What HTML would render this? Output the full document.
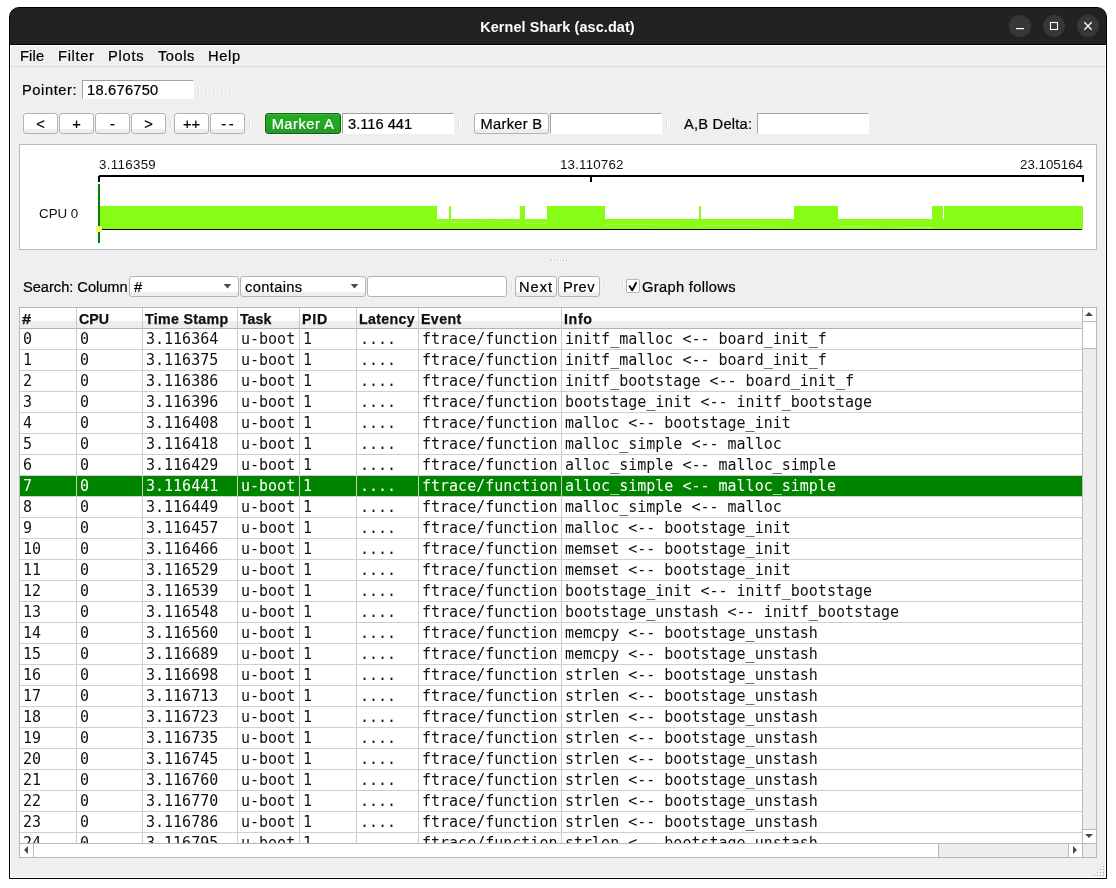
<!DOCTYPE html>
<html lang="en">
<head>
<meta charset="utf-8">
<title>Kernel Shark (asc.dat)</title>
<style>
*{box-sizing:border-box;margin:0;padding:0}
html,body{width:1116px;height:888px;overflow:hidden;background:#fff}
body{position:relative;font-family:"Liberation Sans",sans-serif;font-size:14.67px;color:#000}
.abs{position:absolute}
.win{will-change:transform;position:absolute;left:9px;top:7px;width:1098px;height:872px;background:linear-gradient(#222 0,#222 37px,#efefef 37px,#efefef 100%);border:1px solid #000;border-radius:10px 10px 0 0;overflow:hidden}
.titlebar{position:absolute;left:0;top:0;width:1096px;height:37px;background:#222;border-bottom:1px solid #000}
.title{position:absolute;left:470px;top:10px;width:155px;text-align:center;color:#fff;font-weight:bold;font-size:14.4px;line-height:18px;white-space:nowrap}
.wbtn{position:absolute;top:7px;width:22px;height:22px;border-radius:50%;background:#373737}
.wbtn svg{position:absolute;left:0;top:0}
.menubar{position:absolute;left:0;top:37px;width:1096px;height:22px;border-bottom:1px solid #dcdcdc}
.t{position:absolute;white-space:nowrap;line-height:18px;height:18px}
.inp{position:absolute;background:#fff;border-top:1px solid #a2a2a2;border-left:1px solid #a2a2a2;border-right:1px solid #fff;border-bottom:1px solid #fff;height:21px}
.btn{position:absolute;height:21px;border:1px solid #b4b4b4;border-radius:3px;background:linear-gradient(#fff 0,#fff 76%,#eeeeee 80%,#eeeeee 100%);text-align:center;line-height:21px;white-space:nowrap}
.btn.green{background:linear-gradient(#3dbb3d 0,#3dbb3d 1px,#23a823 1px,#23a823 12px,#289a28 13px,#289a28 100%);border-color:#0a660a;color:#fff;box-shadow:0 0 0 1px rgba(255,250,255,.85)}
.vs{position:absolute;width:2px;height:9px;background:linear-gradient(90deg,#dedede 0,#dedede 50%,#fcfcfc 50%,#fcfcfc 100%)}
.frame{position:absolute;left:9px;top:136px;width:1078px;height:106px;background:#fff;border:1px solid #bcbcbc}
.gt{position:absolute;font-size:13.33px;line-height:14px;white-space:nowrap;color:#111}
.combo{position:absolute;height:21px;border:1px solid #b4b4b4;border-radius:3px;background:linear-gradient(#fff 0,#fff 76%,#eeeeee 80%,#eeeeee 100%);line-height:21px;white-space:nowrap;padding-left:4px}
.combo svg{position:absolute;right:6px;top:6px}
.search{position:absolute;height:21px;border:1px solid #b4b4b4;border-radius:3px;background:#fff}
.chk{position:absolute;width:14px;height:14px;background:#fff;border:1px solid #b6b6b6;border-radius:2px}
.table{will-change:transform;position:absolute;left:19px;top:307px;width:1078px;height:551px;border:1px solid #b7b7b7;background:#fff;overflow:hidden;font-family:"DejaVu Sans Mono","Liberation Mono",monospace;font-size:15px;color:#111}
.thead{position:absolute;left:0;top:0;width:1062px;height:21px;background:linear-gradient(#fff 0,#fff 13px,#ededed 13px,#ededed 20px);border-bottom:1px solid #b2b2b2;font-family:"Liberation Sans",sans-serif;font-weight:bold;font-size:14.2px}
.th{position:absolute;top:2px;line-height:18px;padding-left:2px;white-space:nowrap;color:#111}
.vsep{position:absolute;z-index:3;top:0;width:1px;height:535px;background:#cbcbcb}
.tr{position:absolute;left:0;width:1062px;height:21px;border-bottom:1px solid #cfcfcf}
.tr.sel{background:#008400;color:#fff}
.td{position:absolute;top:0;line-height:20px;padding-left:3px;white-space:pre}
.sb{position:absolute;background:#ededed}
.sbw{position:absolute;background:#fff}
.ln{position:absolute;background:#b9b9b9}
.b2{line-height:21px}
.inner{position:absolute;left:0;top:37px;width:1096px;height:833px;box-shadow:inset 0 0 0 1px #fff}
.t,.btn,.combo{-webkit-text-stroke:.22px currentColor}
.th{-webkit-text-stroke:.25px currentColor}

</style>
</head>
<body>
<div class="win">
<div class="titlebar">
<div class="title" style="letter-spacing:0.12px">Kernel Shark (asc.dat)</div>
<div class="wbtn" style="left:999px"><svg width="22" height="22" viewBox="0 0 22 22"><rect x="7" y="13" width="8" height="1.2" fill="#fff"/></svg></div>
<div class="wbtn" style="left:1033px"><svg width="22" height="22" viewBox="0 0 22 22"><rect x="7.5" y="7.5" width="7" height="7" fill="none" stroke="#fff" stroke-width="1.1"/></svg></div>
<div class="wbtn" style="left:1067px"><svg width="22" height="22" viewBox="0 0 22 22"><path d="M7.3 7.3L14.7 14.7M14.7 7.3L7.3 14.7" fill="none" stroke="#fff" stroke-width="1.3"/></svg></div>
</div>
<div class="inner"></div>
<div class="menubar">
<span class="t" style="left:10px;top:2px;letter-spacing:0.15px">File</span>
<span class="t" style="left:48px;top:2px;letter-spacing:0.68px">Filter</span>
<span class="t" style="left:98px;top:2px;letter-spacing:0.75px">Plots</span>
<span class="t" style="left:148px;top:2px;letter-spacing:0.5px">Tools</span>
<span class="t" style="left:198px;top:2px;letter-spacing:0.63px">Help</span>
</div>
<span class="t" style="left:12px;top:73px;letter-spacing:0.59px">Pointer:</span>
<div class="inp" style="left:72px;top:72px;width:112px;height:19px"><span class="t" style="left:4px;top:0px;letter-spacing:0.24px">18.676750</span></div>

<i class="vs" style="left:188px;top:78px;height:7px"></i><i class="vs" style="left:196px;top:78px;height:7px"></i><i class="vs" style="left:204px;top:78px;height:7px"></i><i class="vs" style="left:212px;top:78px;height:7px"></i><i class="vs" style="left:220px;top:78px;height:7px"></i>
<div class="btn" style="left:13px;top:105px;width:35px">&lt;</div>
<div class="btn" style="left:49px;top:105px;width:35px">+</div>
<div class="btn" style="left:85px;top:105px;width:35px">-</div>
<div class="btn" style="left:121px;top:105px;width:35px">&gt;</div>

<i class="vs" style="left:160px;top:111px;height:9px"></i>
<div class="btn" style="left:164px;top:105px;width:35px">++</div>
<div class="btn" style="left:200px;top:105px;width:35px;letter-spacing:2.7px;padding-left:2.7px">--</div>

<i class="vs" style="left:239px;top:111px;height:9px"></i>
<div class="btn green b2" style="left:255px;top:105px;width:76px;letter-spacing:0.51px">Marker A</div>
<div class="inp" style="left:332px;top:105px;width:112px"><span class="t" style="left:5px;top:1px">3.116 441</span></div>

<i class="vs" style="left:448px;top:111px;height:9px"></i>
<div class="btn b2" style="left:464px;top:105px;width:75px;letter-spacing:0.31px">Marker B</div>
<div class="inp" style="left:540px;top:105px;width:112px"></div>

<i class="vs" style="left:656px;top:111px;height:9px"></i>
<span class="t" style="left:674px;top:107px;letter-spacing:0.23px">A,B Delta:</span>
<div class="inp" style="left:747px;top:105px;width:112px"></div>

<div class="frame">
<svg class="abs" style="left:0;top:0" width="1076" height="104" viewBox="20 145 1076 104">
<rect x="99" y="175" width="985" height="2" fill="#000"/>
<rect x="98" y="176" width="2" height="6" fill="#000"/>
<rect x="590" y="176" width="2" height="6" fill="#000"/>
<rect x="1082" y="176" width="2" height="6" fill="#000"/>
<path d="M100 229V206H437V219H449V206H451V219H520V206H525V219H547V206H605V219H699V206H701V219H794V206H838V219H932V206H943V219H944V206H1083V229Z" fill="#88fc14"/>
<g fill="#fff"><rect x="437" y="222" width="12" height="1" opacity=".28"/><rect x="451" y="222" width="23" height="1" opacity=".28"/><rect x="474" y="222" width="12" height="1" opacity=".14"/><rect x="498" y="223" width="13" height="1" opacity=".14"/><rect x="511" y="223" width="9" height="1" opacity=".28"/><rect x="525" y="223" width="22" height="1" opacity=".28"/><rect x="605" y="224" width="45" height="1" opacity=".28"/><rect x="650" y="224" width="32" height="1" opacity=".14"/><rect x="695" y="225" width="4" height="1" opacity=".18"/><rect x="701" y="225" width="59" height="1" opacity=".28"/><rect x="760" y="225" width="21" height="1" opacity=".14"/><rect x="838" y="226" width="27" height="1" opacity=".28"/><rect x="865" y="226" width="14" height="1" opacity=".14"/><rect x="891" y="227" width="13" height="1" opacity=".14"/><rect x="904" y="227" width="28" height="1" opacity=".28"/></g>
<rect x="100" y="229" width="982" height="1" fill="#000"/>
<rect x="98" y="184" width="2" height="59" fill="#008200"/>
<rect x="96" y="226" width="6" height="6" fill="#ecf871"/>
</svg>
<span class="gt" style="left:79px;top:13px;letter-spacing:.31px">3.116359</span>
<span class="gt" style="left:540px;top:13px;letter-spacing:.18px">13.110762</span>
<span class="gt" style="right:13px;top:13px">23.105164</span>
<span class="gt" style="left:19px;top:62px">CPU 0</span>
</div>
<svg class="abs" style="left:540px;top:251px" width="20" height="4" viewBox="0 0 20 4"><g fill="#fff"><rect x="1" y="1" width="2" height="2"/><rect x="4" y="1" width="2" height="2"/><rect x="7" y="1" width="2" height="2"/><rect x="10" y="1" width="2" height="2"/><rect x="13" y="1" width="2" height="2"/><rect x="16" y="1" width="2" height="2"/></g><g fill="#adadad"><rect x="1" y="1" width="1" height="1"/><rect x="4" y="1" width="1" height="1"/><rect x="7" y="1" width="1" height="1"/><rect x="10" y="1" width="1" height="1"/><rect x="13" y="1" width="1" height="1"/><rect x="16" y="1" width="1" height="1"/></g></svg>

<span class="t" style="left:13px;top:270px;letter-spacing:-0.03px">Search: Column</span>
<div class="combo" style="left:119px;top:268px;width:110px">#<svg width="10" height="7" viewBox="0 0 10 7"><path d="M1.7 1H9.3L5.5 5.5Z" fill="#4a4a4a"/></svg></div>
<div class="combo" style="left:230px;top:268px;width:126px;letter-spacing:0.36px">contains<svg width="10" height="7" viewBox="0 0 10 7"><path d="M1.7 1H9.3L5.5 5.5Z" fill="#4a4a4a"/></svg></div>
<div class="search" style="left:357px;top:268px;width:140px"></div>
<i class="vs" style="left:501px;top:274px;height:9px"></i>

<div class="btn b2" style="left:505px;top:268px;width:42px;letter-spacing:1px">Next</div>
<div class="btn b2" style="left:548px;top:268px;width:42px;letter-spacing:0.47px">Prev</div>


<i class="vs" style="left:594px;top:274px;height:9px"></i><i class="vs" style="left:612px;top:274px;height:9px"></i>
<div class="chk" style="left:616px;top:271px"><svg class="abs" style="left:0;top:0" width="12" height="12" viewBox="0 0 12 12"><path d="M2.2 5.6L5.2 10.2L9.4 2.3" fill="none" stroke="#000" stroke-width="1.9" stroke-linejoin="round"/></svg></div>
<span class="t" style="left:632px;top:270px;letter-spacing:0.33px">Graph follows</span>
<svg class="abs" style="left:1080px;top:854px" width="16" height="16" viewBox="0 0 16 16"><g fill="#fff"><rect x="14" y="5" width="1" height="1"/><rect x="11" y="8" width="1" height="1"/><rect x="14" y="8" width="1" height="1"/><rect x="8" y="11" width="1" height="1"/><rect x="11" y="11" width="1" height="1"/><rect x="14" y="11" width="1" height="1"/><rect x="5" y="14" width="1" height="1"/><rect x="8" y="14" width="1" height="1"/><rect x="11" y="14" width="1" height="1"/><rect x="14" y="14" width="1" height="1"/></g><g fill="#a6a6a6"><rect x="13" y="4" width="1" height="1"/><rect x="10" y="7" width="1" height="1"/><rect x="13" y="7" width="1" height="1"/><rect x="7" y="10" width="1" height="1"/><rect x="10" y="10" width="1" height="1"/><rect x="13" y="10" width="1" height="1"/><rect x="4" y="13" width="1" height="1"/><rect x="7" y="13" width="1" height="1"/><rect x="10" y="13" width="1" height="1"/><rect x="13" y="13" width="1" height="1"/></g></svg>
</div>
<div class="table">
<div class="thead"><span class="th" style="left:0px"><b style="display:inline-block;transform:scaleX(1.15);transform-origin:0 0">#</b></span><span class="th" style="left:57px">CPU</span><span class="th" style="left:123px"><b style="letter-spacing:.33px">Time Stamp</b></span><span class="th" style="left:218px">Task</span><span class="th" style="left:280px"><b style="letter-spacing:.8px">PID</b></span><span class="th" style="left:337px"><b style="letter-spacing:.33px">Latency</b></span><span class="th" style="left:399px"><b style="letter-spacing:.4px">Event</b></span><span class="th" style="left:542px"><b style="letter-spacing:.67px">Info</b></span></div>
<i class="vsep" style="left:56px"></i><i class="vsep" style="left:122px"></i><i class="vsep" style="left:217px"></i><i class="vsep" style="left:279px"></i><i class="vsep" style="left:336px"></i><i class="vsep" style="left:398px"></i><i class="vsep" style="left:541px"></i>
<div class="tr" style="top:21px"><span class="td" style="left:0px">0</span><span class="td" style="left:57px">0</span><span class="td" style="left:123px">3.116364</span><span class="td" style="left:218px">u-boot</span><span class="td" style="left:280px">1</span><span class="td" style="left:337px">....</span><span class="td" style="left:399px">ftrace/function</span><span class="td" style="left:542px">initf_malloc &lt;-- board_init_f</span></div>
<div class="tr" style="top:42px"><span class="td" style="left:0px">1</span><span class="td" style="left:57px">0</span><span class="td" style="left:123px">3.116375</span><span class="td" style="left:218px">u-boot</span><span class="td" style="left:280px">1</span><span class="td" style="left:337px">....</span><span class="td" style="left:399px">ftrace/function</span><span class="td" style="left:542px">initf_malloc &lt;-- board_init_f</span></div>
<div class="tr" style="top:63px"><span class="td" style="left:0px">2</span><span class="td" style="left:57px">0</span><span class="td" style="left:123px">3.116386</span><span class="td" style="left:218px">u-boot</span><span class="td" style="left:280px">1</span><span class="td" style="left:337px">....</span><span class="td" style="left:399px">ftrace/function</span><span class="td" style="left:542px">initf_bootstage &lt;-- board_init_f</span></div>
<div class="tr" style="top:84px"><span class="td" style="left:0px">3</span><span class="td" style="left:57px">0</span><span class="td" style="left:123px">3.116396</span><span class="td" style="left:218px">u-boot</span><span class="td" style="left:280px">1</span><span class="td" style="left:337px">....</span><span class="td" style="left:399px">ftrace/function</span><span class="td" style="left:542px">bootstage_init &lt;-- initf_bootstage</span></div>
<div class="tr" style="top:105px"><span class="td" style="left:0px">4</span><span class="td" style="left:57px">0</span><span class="td" style="left:123px">3.116408</span><span class="td" style="left:218px">u-boot</span><span class="td" style="left:280px">1</span><span class="td" style="left:337px">....</span><span class="td" style="left:399px">ftrace/function</span><span class="td" style="left:542px">malloc &lt;-- bootstage_init</span></div>
<div class="tr" style="top:126px"><span class="td" style="left:0px">5</span><span class="td" style="left:57px">0</span><span class="td" style="left:123px">3.116418</span><span class="td" style="left:218px">u-boot</span><span class="td" style="left:280px">1</span><span class="td" style="left:337px">....</span><span class="td" style="left:399px">ftrace/function</span><span class="td" style="left:542px">malloc_simple &lt;-- malloc</span></div>
<div class="tr" style="top:147px"><span class="td" style="left:0px">6</span><span class="td" style="left:57px">0</span><span class="td" style="left:123px">3.116429</span><span class="td" style="left:218px">u-boot</span><span class="td" style="left:280px">1</span><span class="td" style="left:337px">....</span><span class="td" style="left:399px">ftrace/function</span><span class="td" style="left:542px">alloc_simple &lt;-- malloc_simple</span></div>
<div class="tr sel" style="top:168px"><span class="td" style="left:0px">7</span><span class="td" style="left:57px">0</span><span class="td" style="left:123px">3.116441</span><span class="td" style="left:218px">u-boot</span><span class="td" style="left:280px">1</span><span class="td" style="left:337px">....</span><span class="td" style="left:399px">ftrace/function</span><span class="td" style="left:542px">alloc_simple &lt;-- malloc_simple</span></div>
<div class="tr" style="top:189px"><span class="td" style="left:0px">8</span><span class="td" style="left:57px">0</span><span class="td" style="left:123px">3.116449</span><span class="td" style="left:218px">u-boot</span><span class="td" style="left:280px">1</span><span class="td" style="left:337px">....</span><span class="td" style="left:399px">ftrace/function</span><span class="td" style="left:542px">malloc_simple &lt;-- malloc</span></div>
<div class="tr" style="top:210px"><span class="td" style="left:0px">9</span><span class="td" style="left:57px">0</span><span class="td" style="left:123px">3.116457</span><span class="td" style="left:218px">u-boot</span><span class="td" style="left:280px">1</span><span class="td" style="left:337px">....</span><span class="td" style="left:399px">ftrace/function</span><span class="td" style="left:542px">malloc &lt;-- bootstage_init</span></div>
<div class="tr" style="top:231px"><span class="td" style="left:0px">10</span><span class="td" style="left:57px">0</span><span class="td" style="left:123px">3.116466</span><span class="td" style="left:218px">u-boot</span><span class="td" style="left:280px">1</span><span class="td" style="left:337px">....</span><span class="td" style="left:399px">ftrace/function</span><span class="td" style="left:542px">memset &lt;-- bootstage_init</span></div>
<div class="tr" style="top:252px"><span class="td" style="left:0px">11</span><span class="td" style="left:57px">0</span><span class="td" style="left:123px">3.116529</span><span class="td" style="left:218px">u-boot</span><span class="td" style="left:280px">1</span><span class="td" style="left:337px">....</span><span class="td" style="left:399px">ftrace/function</span><span class="td" style="left:542px">memset &lt;-- bootstage_init</span></div>
<div class="tr" style="top:273px"><span class="td" style="left:0px">12</span><span class="td" style="left:57px">0</span><span class="td" style="left:123px">3.116539</span><span class="td" style="left:218px">u-boot</span><span class="td" style="left:280px">1</span><span class="td" style="left:337px">....</span><span class="td" style="left:399px">ftrace/function</span><span class="td" style="left:542px">bootstage_init &lt;-- initf_bootstage</span></div>
<div class="tr" style="top:294px"><span class="td" style="left:0px">13</span><span class="td" style="left:57px">0</span><span class="td" style="left:123px">3.116548</span><span class="td" style="left:218px">u-boot</span><span class="td" style="left:280px">1</span><span class="td" style="left:337px">....</span><span class="td" style="left:399px">ftrace/function</span><span class="td" style="left:542px">bootstage_unstash &lt;-- initf_bootstage</span></div>
<div class="tr" style="top:315px"><span class="td" style="left:0px">14</span><span class="td" style="left:57px">0</span><span class="td" style="left:123px">3.116560</span><span class="td" style="left:218px">u-boot</span><span class="td" style="left:280px">1</span><span class="td" style="left:337px">....</span><span class="td" style="left:399px">ftrace/function</span><span class="td" style="left:542px">memcpy &lt;-- bootstage_unstash</span></div>
<div class="tr" style="top:336px"><span class="td" style="left:0px">15</span><span class="td" style="left:57px">0</span><span class="td" style="left:123px">3.116689</span><span class="td" style="left:218px">u-boot</span><span class="td" style="left:280px">1</span><span class="td" style="left:337px">....</span><span class="td" style="left:399px">ftrace/function</span><span class="td" style="left:542px">memcpy &lt;-- bootstage_unstash</span></div>
<div class="tr" style="top:357px"><span class="td" style="left:0px">16</span><span class="td" style="left:57px">0</span><span class="td" style="left:123px">3.116698</span><span class="td" style="left:218px">u-boot</span><span class="td" style="left:280px">1</span><span class="td" style="left:337px">....</span><span class="td" style="left:399px">ftrace/function</span><span class="td" style="left:542px">strlen &lt;-- bootstage_unstash</span></div>
<div class="tr" style="top:378px"><span class="td" style="left:0px">17</span><span class="td" style="left:57px">0</span><span class="td" style="left:123px">3.116713</span><span class="td" style="left:218px">u-boot</span><span class="td" style="left:280px">1</span><span class="td" style="left:337px">....</span><span class="td" style="left:399px">ftrace/function</span><span class="td" style="left:542px">strlen &lt;-- bootstage_unstash</span></div>
<div class="tr" style="top:399px"><span class="td" style="left:0px">18</span><span class="td" style="left:57px">0</span><span class="td" style="left:123px">3.116723</span><span class="td" style="left:218px">u-boot</span><span class="td" style="left:280px">1</span><span class="td" style="left:337px">....</span><span class="td" style="left:399px">ftrace/function</span><span class="td" style="left:542px">strlen &lt;-- bootstage_unstash</span></div>
<div class="tr" style="top:420px"><span class="td" style="left:0px">19</span><span class="td" style="left:57px">0</span><span class="td" style="left:123px">3.116735</span><span class="td" style="left:218px">u-boot</span><span class="td" style="left:280px">1</span><span class="td" style="left:337px">....</span><span class="td" style="left:399px">ftrace/function</span><span class="td" style="left:542px">strlen &lt;-- bootstage_unstash</span></div>
<div class="tr" style="top:441px"><span class="td" style="left:0px">20</span><span class="td" style="left:57px">0</span><span class="td" style="left:123px">3.116745</span><span class="td" style="left:218px">u-boot</span><span class="td" style="left:280px">1</span><span class="td" style="left:337px">....</span><span class="td" style="left:399px">ftrace/function</span><span class="td" style="left:542px">strlen &lt;-- bootstage_unstash</span></div>
<div class="tr" style="top:462px"><span class="td" style="left:0px">21</span><span class="td" style="left:57px">0</span><span class="td" style="left:123px">3.116760</span><span class="td" style="left:218px">u-boot</span><span class="td" style="left:280px">1</span><span class="td" style="left:337px">....</span><span class="td" style="left:399px">ftrace/function</span><span class="td" style="left:542px">strlen &lt;-- bootstage_unstash</span></div>
<div class="tr" style="top:483px"><span class="td" style="left:0px">22</span><span class="td" style="left:57px">0</span><span class="td" style="left:123px">3.116770</span><span class="td" style="left:218px">u-boot</span><span class="td" style="left:280px">1</span><span class="td" style="left:337px">....</span><span class="td" style="left:399px">ftrace/function</span><span class="td" style="left:542px">strlen &lt;-- bootstage_unstash</span></div>
<div class="tr" style="top:504px"><span class="td" style="left:0px">23</span><span class="td" style="left:57px">0</span><span class="td" style="left:123px">3.116786</span><span class="td" style="left:218px">u-boot</span><span class="td" style="left:280px">1</span><span class="td" style="left:337px">....</span><span class="td" style="left:399px">ftrace/function</span><span class="td" style="left:542px">strlen &lt;-- bootstage_unstash</span></div>
<div class="tr" style="top:525px"><span class="td" style="left:0px">24</span><span class="td" style="left:57px">0</span><span class="td" style="left:123px">3.116795</span><span class="td" style="left:218px">u-boot</span><span class="td" style="left:280px">1</span><span class="td" style="left:337px">....</span><span class="td" style="left:399px">ftrace/function</span><span class="td" style="left:542px">strlen &lt;-- bootstage_unstash</span></div>
<!-- vertical scrollbar: inner coords (page-20, page-308) -->
<div class="sb" style="left:1062px;top:0;width:14px;height:549px"></div>
<div class="ln" style="left:1062px;top:0;width:1px;height:549px"></div>
<div class="sbw" style="left:1063px;top:0;width:13px;height:13px"></div>
<div class="ln" style="left:1063px;top:13px;width:13px;height:1px"></div>
<div class="sbw" style="left:1063px;top:14px;width:13px;height:26px"></div>
<div class="ln" style="left:1063px;top:40px;width:13px;height:1px"></div>
<div class="ln" style="left:1063px;top:521px;width:13px;height:1px"></div>
<div class="sbw" style="left:1063px;top:522px;width:13px;height:13px"></div>
<svg class="abs" style="left:1063px;top:0" width="13" height="13" viewBox="0 0 13 13"><path d="M2 8L6 4L10 8Z" fill="#4a4a4a"/></svg>
<svg class="abs" style="left:1063px;top:522px" width="13" height="13" viewBox="0 0 13 13"><path d="M2 4L6 8L10 4Z" fill="#4a4a4a"/></svg>
<!-- horizontal scrollbar -->
<div class="sb" style="left:0;top:535px;width:1076px;height:14px"></div>
<div class="ln" style="left:0;top:535px;width:1076px;height:1px"></div>
<div class="sbw" style="left:0;top:536px;width:13px;height:13px"></div>
<div class="ln" style="left:13px;top:536px;width:1px;height:13px"></div>
<div class="sbw" style="left:14px;top:536px;width:904px;height:13px"></div>
<div class="ln" style="left:918px;top:536px;width:1px;height:13px"></div>
<div class="ln" style="left:1048px;top:536px;width:1px;height:13px"></div>
<div class="sbw" style="left:1049px;top:536px;width:13px;height:13px"></div>
<div class="ln" style="left:1062px;top:536px;width:1px;height:13px"></div>
<svg class="abs" style="left:0;top:536px" width="13" height="13" viewBox="0 0 13 13"><path d="M8 2L4 6L8 10Z" fill="#4a4a4a"/></svg>
<svg class="abs" style="left:1049px;top:536px" width="13" height="13" viewBox="0 0 13 13"><path d="M4 2L8 6L4 10Z" fill="#4a4a4a"/></svg>
</div>
</body>
</html>
